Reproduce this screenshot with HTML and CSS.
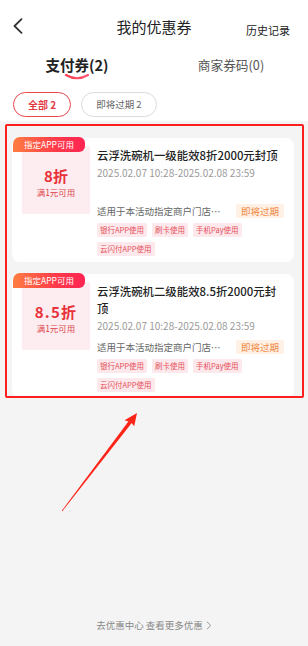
FILE: index.html
```html
<!DOCTYPE html>
<html lang="zh-CN">
<head>
<meta charset="utf-8">
<title>我的优惠券</title>
<link rel="stylesheet" href="styles.css">
</head>
<body>
<div class="page">
  <header class="top">
    <div class="nav">
      <div class="nav-left">
        <svg class="back" width="12" height="16" viewBox="0 0 12 16"><path d="M9.5 1.2 L2.5 8 L9.5 14.8" fill="none" stroke="#333" stroke-width="1.8" stroke-linecap="round" stroke-linejoin="round"/></svg>
      </div>
      <h1 class="title">我的优惠券</h1>
      <div class="nav-right"><span class="history">历史记录</span></div>
    </div>
    <div class="tabs">
      <div class="tab tab-active">
        <span class="tab-text">支付券(2)</span>
        <svg class="tab-line" width="26" height="7" viewBox="0 0 26 7"><defs><linearGradient id="ul" x1="0" x2="1" y1="0" y2="0"><stop offset="0" stop-color="#ff3b4e"/><stop offset="1" stop-color="#ff5a78"/></linearGradient></defs><path d="M2 2 Q13 8.5 24 2" fill="none" stroke="url(#ul)" stroke-width="2.2" stroke-linecap="round"/></svg>
      </div>
      <div class="tab">
        <span class="tab-text">商家券码(0)</span>
      </div>
    </div>
    <div class="chips">
      <span class="chip chip-on">全部 2</span>
      <span class="chip">即将过期 2</span>
    </div>
  </header>

  <main class="list">
    <div class="card">
      <span class="badge">指定APP可用</span>
      <div class="value">
        <div class="value-big">8折</div>
        <div class="value-sub">满1元可用</div>
      </div>
      <div class="info">
        <div class="info-top">
          <div class="name">云浮洗碗机一级能效8折2000元封顶</div>
          <div class="date">2025.02.07 10:28-2025.02.08 23:59</div>
        </div>
        <div class="scope-row">
          <span class="scope">适用于本活动指定商户门店…</span>
          <span class="expire">即将过期</span>
        </div>
        <div class="tags">
          <span class="tag">银行APP使用</span>
          <span class="tag">刷卡使用</span>
          <span class="tag">手机Pay使用</span>
          <span class="tag">云闪付APP使用</span>
        </div>
      </div>
    </div>

    <div class="card">
      <span class="badge">指定APP可用</span>
      <div class="value">
        <div class="value-big value-wide">8.5折</div>
        <div class="value-sub">满1元可用</div>
      </div>
      <div class="info">
        <div class="info-top">
          <div class="name">云浮洗碗机二级能效8.5折2000元封顶</div>
          <div class="date">2025.02.07 10:28-2025.02.08 23:59</div>
        </div>
        <div class="scope-row">
          <span class="scope">适用于本活动指定商户门店…</span>
          <span class="expire">即将过期</span>
        </div>
        <div class="tags">
          <span class="tag">银行APP使用</span>
          <span class="tag">刷卡使用</span>
          <span class="tag">手机Pay使用</span>
          <span class="tag">云闪付APP使用</span>
        </div>
      </div>
    </div>
  </main>

  <footer class="foot">
    <span>去优惠中心 查看更多优惠</span>
    <svg width="6" height="9" viewBox="0 0 6 9"><path d="M1 0.8 L4.8 4.5 L1 8.2" fill="none" stroke="#999" stroke-width="1"/></svg>
  </footer>

  <div class="frame"></div>
  <svg class="arrow" width="308" height="646" viewBox="0 0 308 646">
    <polygon points="61.7,510.8 62.3,511.2 132.3,422.2 129.5,420.0" fill="#ff2418"/>
    <polygon points="137,413 134.2,426.2 131.2,422.6 124.6,420.2" fill="#ff2418"/>
  </svg>
</div>
</body>
</html>
```

FILE: styles.css
```css
* { box-sizing: border-box; }
html, body { margin: 0; padding: 0; }
body {
  background: #f4f4f4;
  font-family: "Noto Sans CJK SC", "Noto Sans", "Liberation Sans", sans-serif;
  color: #222;
}
.page {
  position: relative;
  width: 308px;
  height: 646px;
  display: flex;
  flex-direction: column;
  overflow: hidden;
}
.top {
  background: #fff;
  padding-bottom: 4px;
}
.nav {
  height: 54px;
  display: grid;
  grid-template-columns: 1fr auto 1fr;
  align-items: center;
}
.nav-left { padding-left: 12px; display: flex; }
.back { margin-top: -3px; }
.title {
  margin: 0;
  font-size: 15px;
  line-height: 20px;
  font-weight: 400;
  color: #222;
}
.nav-right { display: flex; justify-content: flex-end; padding-right: 18px; }
.history { font-size: 11px; line-height: 14px; margin-top: 6px; color: #222; }

.tabs { display: flex; height: 26px; }
.tab {
  flex: 1;
  display: flex;
  flex-direction: column;
  align-items: center;
}
.tab-text { font-size: 12.7px; line-height: 21px; color: #555; }
.tab-active .tab-text { font-size: 14.5px; font-weight: 700; color: #222; }
.tab-line { margin-top: -2px; }

.chips {
  display: flex;
  gap: 10px;
  padding: 0 13px;
  margin-top: 12px;
}
.chip {
  height: 25px;
  padding: 0 14px;
  border: 1px solid #dcdcdc;
  border-radius: 13px;
  font-size: 9.5px;
  line-height: 23px;
  color: #666;
  white-space: nowrap;
}
.chip-on {
  border-color: #e8474f;
  color: #e23a43;
  font-size: 10px;
  font-weight: 700;
}

.list {
  display: flex;
  flex-direction: column;
  gap: 12px;
  padding: 17px 14px 0 12px;
}
.card {
  position: relative;
  background: #fff;
  border-radius: 8px;
  height: 124px;
  display: flex;
  align-items: flex-start;
  padding: 8px 10px 6px 10px;
}
.badge {
  position: absolute;
  left: 1px;
  top: -1px;
  width: 72px;
  height: 15px;
  border-radius: 7px 6px 6px 0;
  background: linear-gradient(90deg, #ff7d42 0%, #ff3a4a 60%, #ff2453 100%);
  color: #fff;
  font-size: 8.5px;
  line-height: 15px;
  text-align: center;
}
.value {
  flex: none;
  width: 68px;
  height: 68px;
  background: #fdedf0;
  display: flex;
  flex-direction: column;
  align-items: center;
  justify-content: center;
  padding-top: 4px;
  gap: 1px;
}
.value-big {
  font-size: 15px;
  line-height: 19px;
  font-weight: 700;
  color: #e8313a;
}
.value-wide { letter-spacing: 1.2px; }
.value-sub {
  font-size: 8.5px;
  line-height: 12px;
  color: #e0474f;
}
.info {
  flex: 1;
  min-width: 0;
  margin-left: 7px;
  display: flex;
  flex-direction: column;
}
.info-top { min-height: 58px; padding-top: 1px; }
.name {
  font-size: 11.4px;
  line-height: 17px;
  font-weight: 500;
  color: #222;
  padding-right: 4px;
}
.date {
  margin-top: 1px;
  font-size: 10px;
  line-height: 15px;
  color: #9a9a9a;
}
.scope-row {
  height: 14px;
  display: flex;
  align-items: center;
  justify-content: space-between;
}
.scope { font-size: 9.5px; line-height: 14px; color: #666; }
.expire {
  height: 14px;
  padding: 0 5px;
  background: #fff1e6;
  border-radius: 2px;
  color: #f0883e;
  font-size: 9.5px;
  line-height: 14px;
}
.tags {
  margin-top: 5px;
  display: flex;
  flex-wrap: wrap;
  gap: 5px;
}
.tag {
  height: 14px;
  padding: 0 3px;
  background: #fde8ec;
  border-radius: 2px;
  color: #e5505a;
  font-size: 7.5px;
  line-height: 14px;
}

.foot {
  margin-top: auto;
  padding-bottom: 14px;
  display: flex;
  justify-content: center;
  align-items: center;
  gap: 3px;
  font-size: 9.5px;
  line-height: 14px;
  color: #888;
}

.frame {
  position: absolute;
  left: 5px;
  top: 124px;
  width: 299px;
  height: 274px;
  border: 2.5px solid #ff1f1f;
  border-radius: 2px;
  pointer-events: none;
}
.arrow {
  position: absolute;
  left: 0;
  top: 0;
  pointer-events: none;
}
```
